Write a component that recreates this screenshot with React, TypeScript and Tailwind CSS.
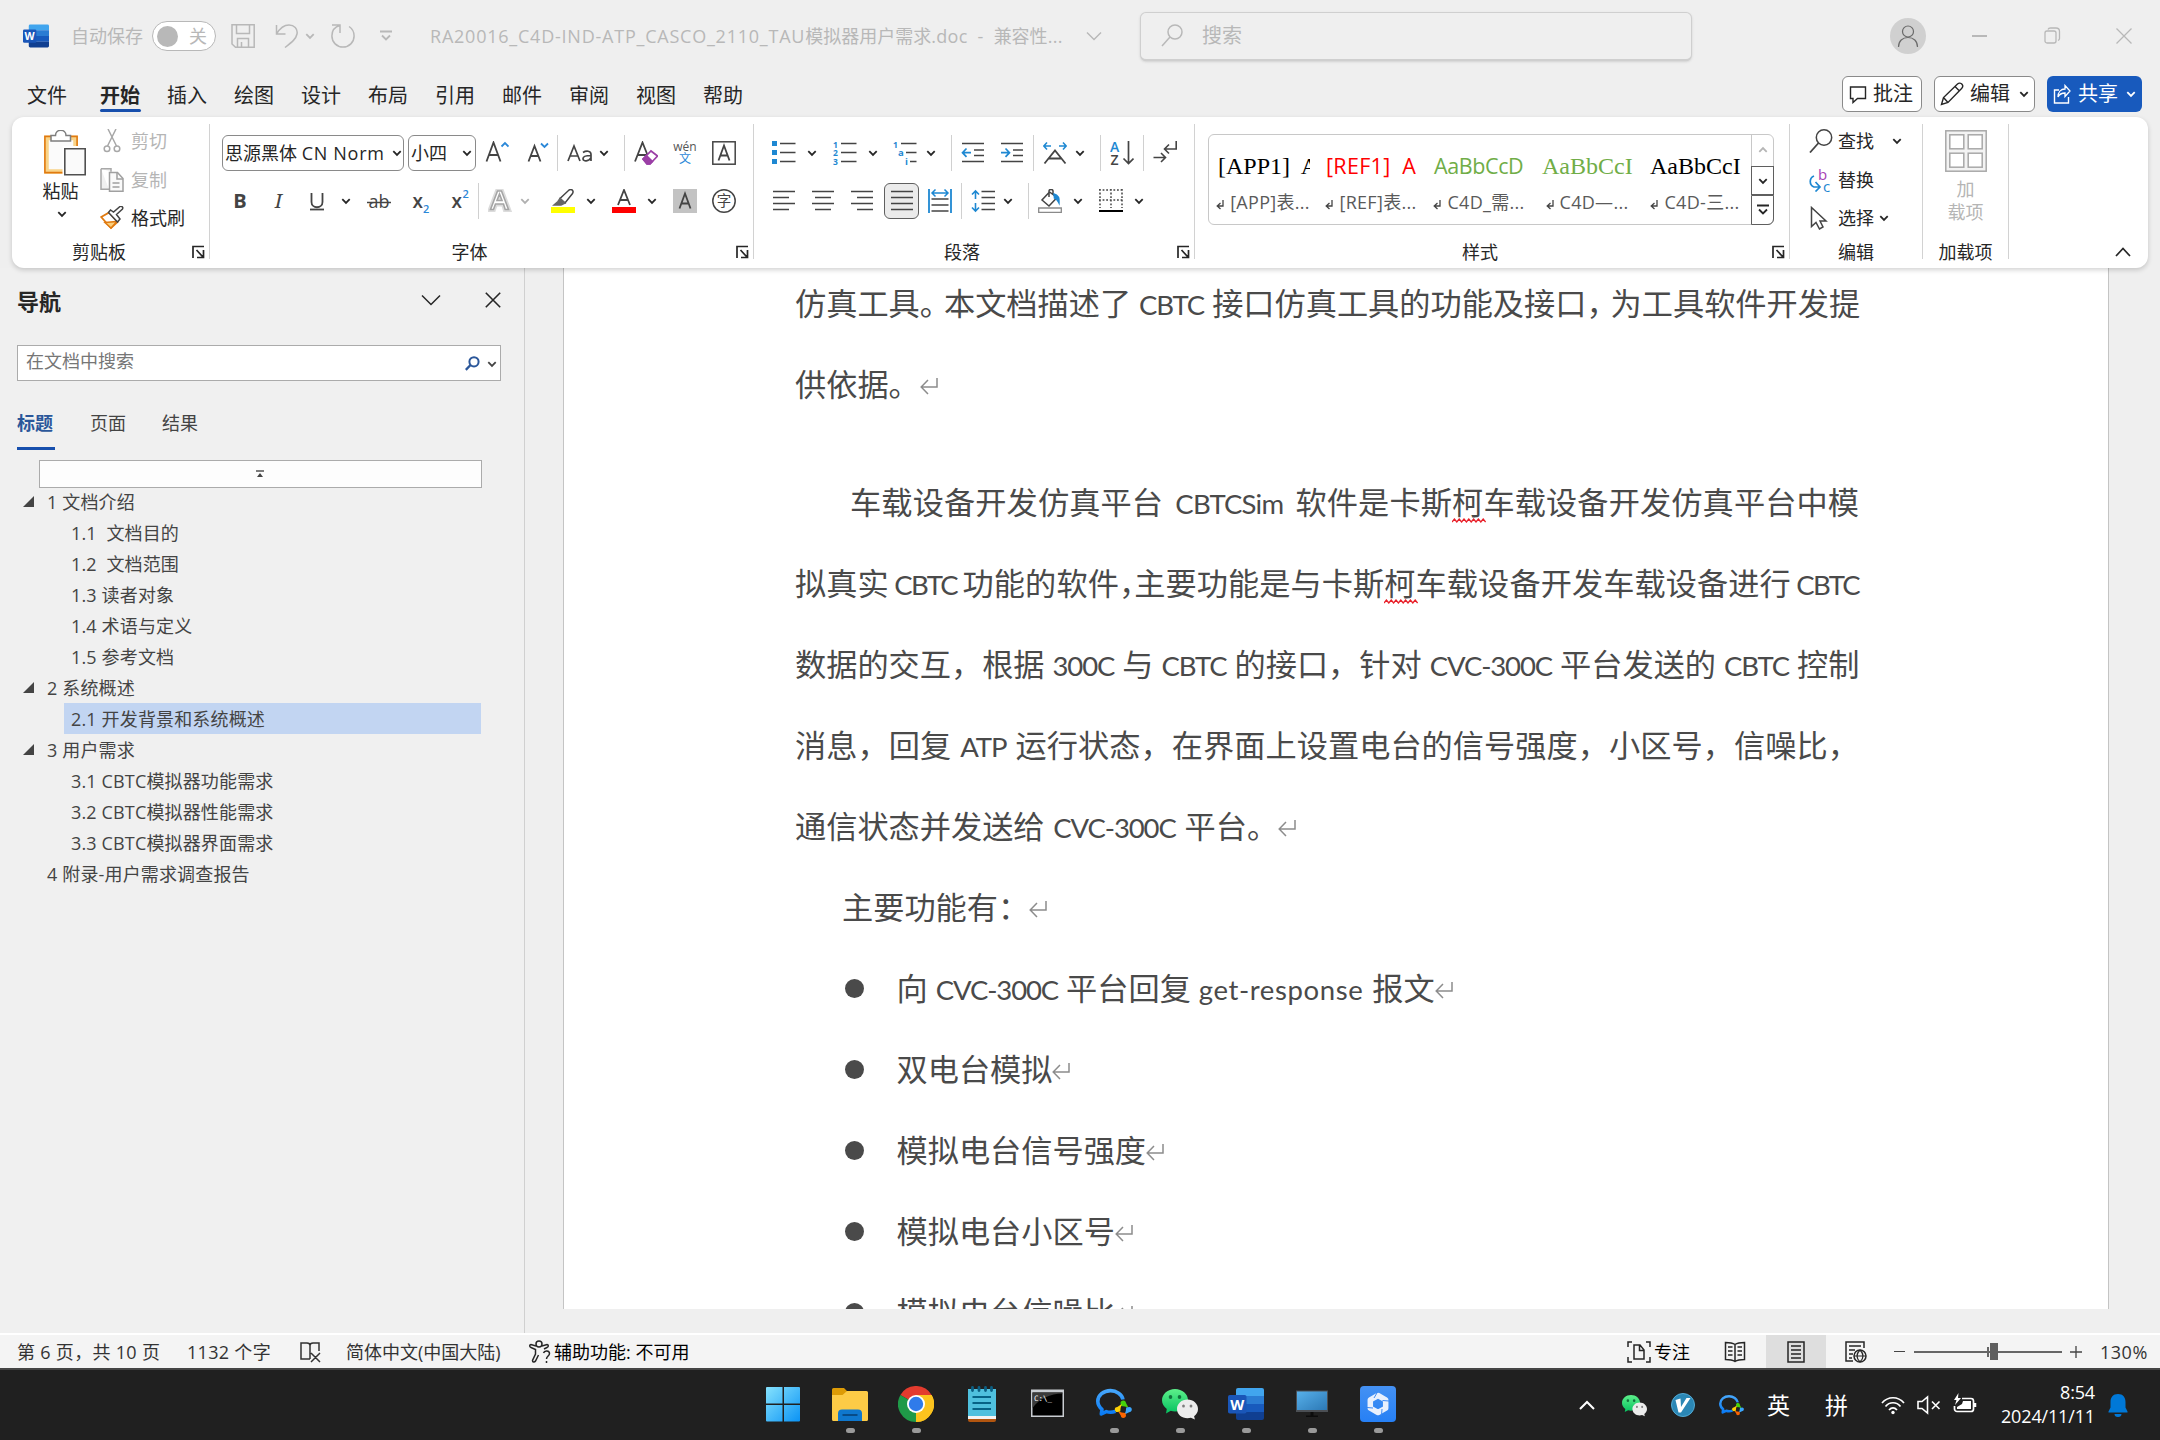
import type { ReactNode } from 'react';

const UI = "font-['Open_Sans','Noto_Sans_CJK_SC',sans-serif]";

function Svg({ w = 24, h = 24, className = '', children }: { w?: number; h?: number; className?: string; children: ReactNode }) {
  return (
    <svg width={w} height={h} viewBox={`0 0 ${w} ${h}`} fill="none" stroke="#444444" strokeWidth="1.5" className={`shrink-0 ${className}`}>
      {children}
    </svg>
  );
}

function Chev({ className = '', color = '#262626' }: { className?: string; color?: string }) {
  return (
    <Svg w={10} h={10} className={className}>
      <path d="M1.3 3.2 5 6.9 8.7 3.2" stroke={color} strokeWidth="1.8" />
    </Svg>
  );
}

function Sep({ className = '' }: { className?: string }) {
  return <div className={`h-9 w-px shrink-0 bg-[#d0d0d0] ${className}`} />;
}

/* ---------- shared app logos ---------- */

function WordLogo({ size, className = '' }: { size: number; className?: string }) {
  return (
    <svg width={size} height={size} viewBox="0 0 36 36" className={`shrink-0 ${className}`}>
      <path d="M10 2h24a2 2 0 0 1 2 2v6H8V4a2 2 0 0 1 2-2z" fill="#41a5ee" />
      <path d="M8 10h28v8H8z" fill="#2b7cd3" />
      <path d="M8 18h28v8H8z" fill="#185abd" />
      <path d="M8 26h28v6a2 2 0 0 1-2 2H10a2 2 0 0 1-2-2z" fill="#103f91" />
      <rect x="0" y="9" width="18.5" height="18.5" rx="1.8" fill="#1a56b8" />
      <text x="9.2" y="23.6" fontSize="14.5" fontWeight="700" textAnchor="middle" fill="#fff" fontFamily="Open Sans">W</text>
    </svg>
  );
}

function WeChat({ size, className = '' }: { size: number; className?: string }) {
  return (
    <svg width={size} height={size} viewBox="0 0 36 36" className={`shrink-0 ${className}`}>
      <defs>
        <linearGradient id="wc" x1="0" y1="0" x2="0" y2="1">
          <stop offset="0" stopColor="#5df08a" />
          <stop offset="1" stopColor="#05c160" />
        </linearGradient>
      </defs>
      <path d="M13 3C5.800 3 0 8 0 14.300c0 3.500 1.800 6.500 4.800 8.600L4 27.500l4.800-2.700c1.300.4 2.700.6 4.200.6 7.200 0 13-5 13-11.200S20.200 3 13 3z" fill="url(#wc)" />
      <ellipse cx="8.500" cy="11" rx="1.800" ry="2" fill="#11743e" />
      <ellipse cx="17.500" cy="11" rx="1.800" ry="2" fill="#11743e" />
      <path d="M25.500 13.500C19.700 13.500 15 17.700 15 23s4.700 9.300 10.500 9.300c1.200 0 2.300-.2 3.400-.5l4 1.700-.8-3.300c2.400-1.700 3.900-4.200 3.900-7.200 0-5.300-4.700-9.500-10.500-9.500z" fill="#ececec" />
      <ellipse cx="21.500" cy="20" rx="1.400" ry="1.600" fill="#7d7d7d" />
      <ellipse cx="29" cy="20" rx="1.400" ry="1.600" fill="#7d7d7d" />
    </svg>
  );
}

function WeCom({ size, className = '' }: { size: number; className?: string }) {
  return (
    <svg width={size} height={size} viewBox="0 0 36 36" className={`shrink-0 ${className}`}>
      <defs>
        <linearGradient id="wecom" x1="0" y1="0" x2="0" y2="1">
          <stop offset="0" stopColor="#45a6fb" />
          <stop offset="1" stopColor="#0a7bf5" />
        </linearGradient>
      </defs>
      <path d="M27 13.500C26 8.500 20.500 4.600 14.500 4.600 7.500 4.600 1.800 9.300 1.800 15.300c0 3.200 1.500 5.900 4.200 8L5.300 28l5-2.400c2.800.9 6 .9 9.200-.2" fill="none" stroke="url(#wecom)" strokeWidth="3.600" strokeLinejoin="round" />
      <g>
        <path d="M27.300 14.500c2 0 2.700 1.500 2.700 2.600l2.500 4.700-3.500-1.300-4-.5-.5-3c0-1.500 1.200-2.500 2.800-2.500z" fill="#45d30a" />
        <path d="M35.800 23.500c0 1.800-1.400 2.700-2.700 2.700L28.500 28.500l1.300-3.500.4-3.500 3.200-.5c1.500 0 2.400 1.200 2.400 2.500z" fill="#3ba6fc" />
        <path d="M27.300 32c-1.800 0-2.500-1.400-2.500-2.500L22 25.200l3.800 1.300 3.700.4.500 2.700c0 1.500-1.200 2.400-2.700 2.400z" fill="#fb6500" />
        <path d="M18.800 23.500c0-1.800 1.200-2.500 2.500-2.500l4.500-3-1.200 4-.3 3.600-3 .5c-1.500 0-2.500-1.200-2.500-2.600z" fill="#fdd005" />
      </g>
    </svg>
  );
}

/* ---------- title bar ---------- */

function TitleBar() {
  return (
    <div className="flex h-[72px] items-center text-lg leading-none text-[#b8b8b8]">
      <WordLogo size={26} className="ml-[23px]" />
      <span className="ml-[22px] w-[74px]">自动保存</span>
      <div className="ml-[7px] flex h-[30px] w-16 items-center rounded-full border-[1.5px] border-[#b8b8b8] bg-white pl-[4px]">
        <span className="size-[21px] rounded-full bg-[#b8b8b8]" />
        <span className="ml-[11px]">关</span>
      </div>
      <Svg className="ml-[15px]">
        <g stroke="#b8b8b8">
          <path d="M1 .8h22.200v22.400H4.500L1 20zM5.500 1v8.500h13V1M6.500 23v-8.500h11V23M10.500 18v5" />
        </g>
      </Svg>
      <Svg className="ml-5">
        <path d="M1.500 1v9h9M1.500 10C5 4 9 1 14 1c5 0 9 3.500 8 9-1 5-5 8-12 13.500" stroke="#b8b8b8" />
      </Svg>
      <Chev className="ml-[6px]" color="#b8b8b8" />
      <Svg className="ml-[16px]">
        <path d="M1 1h8v8M9 1.500C3 3 .9 7.500.9 12a11.100 11.100 0 0 0 22.200 0c0-4-2-7.500-5-9.500" stroke="#b8b8b8" />
      </Svg>
      <Svg w={12} h={12} className="ml-[25px]">
        <path d="M0 1.500h12M2 5.500l4 4 4-4" stroke="#b8b8b8" strokeWidth="1.800" />
      </Svg>
      <span className="ml-[38px] w-[634px] text-lg whitespace-pre">
        <span className="tracking-[0.770px]">RA20016_C4D-IND-ATP_CASCO_2110_TAU</span>模拟器用户需求<span className="tracking-[0.300px]">.doc  -  </span>兼容性<span className="tracking-[0.300px]">...</span>
      </span>
      <Svg w={16} h={10} className="ml-[22px]">
        <path d="M1 1.500l7 7 7-7" stroke="#b8b8b8" />
      </Svg>
      <div className="mt-px ml-[38px] flex h-[49px] w-[552px] items-center rounded-md border border-b-2 border-[#cfcfcf] bg-[#efefef] pl-5 text-xl shadow-sm">
        <Svg w={22}>
          <circle cx="14" cy="8" r="7" stroke="#b8b8b8" />
          <path d="M9 13L1 22" stroke="#b8b8b8" />
        </Svg>
        <span className="ml-[19px]">搜索</span>
      </div>
      <div className="ml-[198px] flex size-9 items-center justify-center rounded-full bg-[#d0d0d0]">
        <Svg w={22}>
          <circle cx="11" cy="7.500" r="5.500" stroke="#6a6a6a" strokeWidth="1.200" />
          <path d="M1.500 23c0-6 4-9.500 9.500-9.500s9.500 3.500 9.500 9.500" stroke="#6a6a6a" strokeWidth="1.200" />
        </Svg>
      </div>
      <div className="ml-[46px] h-[1.500px] w-[15px] bg-[#b8b8b8]" />
      <Svg w={18} h={18} className="ml-[57px]">
        <rect x="1" y="4" width="11" height="12" rx="2" stroke="#b8b8b8" strokeWidth="1.300" />
        <path d="M4 2.500C4.500 1 5 1 6.500 1H12c2 0 3.500 1 3.500 3.500v7c0 1-.5 1.500-1.500 2" stroke="#b8b8b8" strokeWidth="1.300" />
      </Svg>
      <Svg w={16} h={16} className="ml-[54px]">
        <path d="M.5.500l15 15M15.500.500l-15 15" stroke="#b8b8b8" strokeWidth="1.300" />
      </Svg>
    </div>
  );
}

const tabs = ['文件', '开始', '插入', '绘图', '设计', '布局', '引用', '邮件', '审阅', '视图', '帮助'];

function TabRow() {
  return (
    <div className="flex h-[45px] pl-[27px] text-xl leading-none text-[#262626]">
      {tabs.map((t, i) => (
        <div key={t} className={`relative pt-[14px] ${i === 0 ? 'w-[73px]' : 'w-[67px]'} ${i === 1 ? 'font-bold' : ''}`}>
          {t}
          {i === 1 && <span className="absolute top-[37px] left-0 h-[3px] w-[41px] rounded-full bg-[#174fad]" />}
        </div>
      ))}
      <div className="mt-1 ml-auto flex h-9 w-20 items-center rounded-md border border-[#8a8a8a] bg-white pl-[6px]">
        <Svg w={18} h={20}>
          <path d="M1.500 3h15v11.500H8.500L4 18.500v-4H1.500z" stroke="#262626" strokeWidth="1.400" />
        </Svg>
        <span className="ml-[6px]">批注</span>
      </div>
      <div className="mt-1 ml-3 flex h-9 w-[101px] items-center rounded-md border border-[#8a8a8a] bg-white pl-[5px]">
        <Svg>
          <path d="M1.500 22.500l2-7L17.500 2c1.500-1.300 3.500-1 4.500.2 1 1.200.8 3-.4 4.200L8 20.500zM15 4.500l4.500 4.500M3.500 15.500L8 20.500" stroke="#262626" strokeWidth="1.400" />
        </Svg>
        <span className="ml-[6px]">编辑</span>
        <Chev className="ml-[9px]" />
      </div>
      <div className="mt-1 mr-[18px] ml-3 flex h-9 w-[95px] items-center rounded-md bg-[#185abd] pl-[6px] text-white">
        <Svg w={18} h={20}>
          <path d="M6 6H1.500v13h14v-6" stroke="#fff" strokeWidth="1.400" />
          <path d="M5 13c0-5 3-8 7-8V1.500L17 7l-5 5.500V9C9 9 6.500 10 5 13z" stroke="#fff" strokeWidth="1.300" />
        </Svg>
        <span className="ml-[7px]">共享</span>
        <Chev className="ml-[8px]" color="#fff" />
      </div>
    </div>
  );
}

/* ---------- ribbon ---------- */

function Group({ className, label, launcher = true, children }: { className: string; label: string; launcher?: boolean; children: ReactNode }) {
  return (
    <div className={`flex h-[135px] shrink-0 flex-col border-r border-[#d2d2d2] ${className}`}>
      <div className="h-[121px]">{children}</div>
      <div className="flex h-[14px] items-center">
        <span className="flex-1 text-center text-lg leading-none text-[#262626]">{label}</span>
        {launcher && (
          <div className="w-[24px] pl-[7px]">
            <Svg w={13} h={14}>
              <path d="M1 13V1.500h11M4.500 5l6 6.500M11.500 5v7.500H5" stroke="#262626" strokeWidth="1.700" />
            </Svg>
          </div>
        )}
      </div>
    </div>
  );
}

function Clipboard() {
  return (
    <Group className="w-[198px] pl-px" label="剪贴板">
      <div className="flex">
        <div className="ml-[24px] flex w-[47px] flex-col items-center pt-[6px]">
          <Svg w={42} h={46} className="ml-[8px]">
            <path d="M2.500 8h29v33.500h-29z" fill="#fbfbfb" stroke="#f9d489" strokeWidth="4.500" />
            <path d="M.9 6.400h32.200V42.600H.9z" stroke="#e07a10" strokeWidth="1.600" />
            <path d="M7 11V5.500h4.500c0-7 10.500-7 10.500 0h4.500V11z" fill="#fff" stroke="#7e7e7e" strokeWidth="1.500" />
            <path d="M18.500 16h23.500v30h-23.500z" fill="#fff" stroke="none" />
            <path d="M20.800 18.800h20.400v26H20.800z" fill="#fafafa" stroke="#505050" strokeWidth="1.600" />
          </Svg>
          <span className="mt-[6px] text-lg leading-none text-[#262626]">粘贴</span>
          <Chev className="mt-[9px] ml-[3px]" />
        </div>
        <div className="ml-[16px] flex flex-col pt-[5px] text-lg leading-none text-[#b5b5b5]">
          <div className="flex h-6 items-center">
            <Svg>
              <g stroke="#a8a8a8">
                <path d="M8 0l8.500 17M16 0L7.500 17" />
                <circle cx="7" cy="19.800" r="2.800" />
                <circle cx="17" cy="19.800" r="2.800" />
              </g>
            </Svg>
            <span className="ml-[7px]">剪切</span>
          </div>
          <div className="mt-[15px] flex h-6 items-center">
            <Svg>
              <path d="M1 .8h10v3M9 21.200H1V.8" stroke="#a8a8a8" fill="#f1f1f1" />
              <path d="M9.500 4.500h8l5.500 6v12.700H9.500z" fill="#fafafa" stroke="#a0a0a0" />
              <path d="M17 4.500v6.500h6M12.500 15h7M12.500 19h7" stroke="#a0a0a0" />
            </Svg>
            <span className="ml-[7px]">复制</span>
          </div>
          <div className="mt-[14px] flex h-6 items-center text-[#262626]">
            <Svg>
              <path d="M1.200 11l8-4.500 8.300 9.500-6.500 6z" fill="#fff" stroke="#e07a10" strokeWidth="1.800" />
              <path d="M5 16.500l12-1-6 6.500z" fill="#fbd07d" stroke="#e07a10" />
              <path d="M8.500 6.500l9 9.500 2.500-3-3.500-4.500 6-5.500c1-2-.7-3-2.500-2.500l-6.500 5.500L10.500 4z" fill="#fff" stroke="#444" />
            </Svg>
            <span className="ml-[7px]">格式刷</span>
          </div>
        </div>
      </div>
    </Group>
  );
}

function GText({ children, ...p }: { children: ReactNode; [k: string]: unknown }) {
  return (
    <text stroke="none" fill="#444444" fontFamily="Open Sans, Noto Sans CJK SC" {...p}>
      {children}
    </text>
  );
}

function FontGroup() {
  return (
    <Group className="w-[544px]" label="字体">
      <div className="flex items-center pt-[11px] pl-3 text-lg leading-none text-[#262626]">
        <div className="flex h-9 w-[182px] shrink-0 items-center rounded-md border border-[#8a8a8a] pl-[2px]">
          <span className="w-[164px] whitespace-nowrap">
            思源黑体 <span className="tracking-[0.700px]">CN Norm</span>
          </span>
          <Chev className="ml-[3px]" />
        </div>
        <div className="ml-1 flex h-9 w-[68px] shrink-0 items-center rounded-md border border-[#8a8a8a] pl-[2px]">
          小四
          <Chev className="ml-[15px]" />
        </div>
        <Svg className="ml-[9px]">
          <path d="M1.500 20.500L8.500 1.500l7 19M4 14h9" strokeWidth="1.800" />
          <path d="M16.500 5.500L20 2l3.500 3.500" stroke="#2b88d8" strokeWidth="1.800" />
        </Svg>
        <Svg className="ml-4">
          <path d="M3.500 20.500L9.500 5l6 15.500M6 15h7" strokeWidth="1.800" />
          <path d="M16 2.500L19.500 6 23 2.500" stroke="#2b88d8" strokeWidth="1.800" />
        </Svg>
        <Sep className="ml-2" />
        <Svg w={26} className="ml-[9px]">
          <path d="M1 20L7 5l6 15M3.200 15h7.600" strokeWidth="1.700" />
          <path d="M16 11.500c3-2 8-2 8 2V20M24 14.500c-4 0-8 .5-8 3.200 0 3 6 3 8-1" strokeWidth="1.700" />
        </Svg>
        <Chev className="ml-[6px]" />
        <Sep className="ml-[15px]" />
        <Svg className="ml-[9px]">
          <path d="M1 20.500L8.500 1.500l6 15M4 14h9" strokeWidth="1.800" />
          <path d="M9 18l8-8 6.500 5-7.500 8h-3z" fill="#fff" stroke="#9b3fa6" strokeWidth="1.700" />
          <path d="M9 18l3.500-3.500 6 6L16 23h-3z" fill="#9b3fa6" stroke="#9b3fa6" />
        </Svg>
        <Svg className="ml-[15px]">
          <GText x="12" y="9.500" fontSize="12" textAnchor="middle" fill="#555">wén</GText>
          <GText x="12" y="22" fontSize="12" textAnchor="middle" fill="#2b88d8">文</GText>
        </Svg>
        <Svg className="ml-[15px]">
          <rect x=".8" y=".8" width="22.400" height="22.400" />
          <path d="M6.500 19.500L12 4.500l5.500 15M8.500 14.500h7" strokeWidth="1.800" />
        </Svg>
      </div>
      <div className="mt-3 flex h-9 items-center pl-[18px]">
        <Svg><GText x="12" y="18.500" fontSize="20" fontWeight="700" textAnchor="middle">B</GText></Svg>
        <Svg className="ml-[14px]"><GText x="12.500" y="18.500" fontSize="20" fontStyle="italic" textAnchor="middle" fontFamily="Noto Serif, Liberation Serif">I</GText></Svg>
        <Svg className="ml-[15px]">
          <path d="M6.500 4v9c0 7 11 7 11 0V4" strokeWidth="1.800" />
          <path d="M5 20.500h14" strokeWidth="1.800" />
        </Svg>
        <Chev className="ml-3" />
        <Svg className="ml-4">
          <GText x="12" y="18.500" fontSize="18" textAnchor="middle">ab</GText>
          <path d="M0 13.500h24" />
        </Svg>
        <Svg className="ml-[18px]">
          <GText x="3.500" y="18.500" fontSize="19" fontWeight="600">x</GText>
          <GText x="14" y="23.500" fontSize="11" fill="#2b88d8" fontWeight="600">2</GText>
        </Svg>
        <Svg className="ml-[15px]">
          <GText x="3.500" y="18.500" fontSize="19" fontWeight="600">x</GText>
          <GText x="14.500" y="8.500" fontSize="11" fill="#2b88d8" fontWeight="600">2</GText>
        </Svg>
        <Sep className="ml-[6px]" />
        <Svg className="ml-[9px]">
          <path d="M2.500 20.500L9.500 2h4l7 18.500h-3.300L15.500 15h-8l-2 5.500zM9 11.500h5L11.500 5z" fill="#fff" stroke="#dcdcdc" strokeWidth="5" />
          <path d="M2.500 20.500L9.500 2h4l7 18.500h-3.300L15.500 15h-8l-2 5.500zM9 11.500h5L11.500 5z" fill="#fff" stroke="#a5a5a5" strokeWidth="1.600" />
        </Svg>
        <Chev className="ml-2" color="#b0b0b0" />
        <Svg className="ml-[21px]">
          <path d="M0 18h24v6H0z" fill="#ffff00" stroke="none" />
          <path d="M9 9.500L18 1c3-1.500 5 1 3.500 3.500L14 14z" />
          <path d="M9 9.500L14 14l-4 2H3l4-3.500z" fill="#666" stroke="#666" />
        </Svg>
        <Chev className="ml-[11px]" />
        <Svg className="ml-4">
          <path d="M0 18h24v6H0z" fill="#ff0000" stroke="none" />
          <path d="M6 16L12 1l6 15M8 11h8" strokeWidth="1.800" />
        </Svg>
        <Chev className="ml-[11px]" />
        <Svg className="ml-4">
          <path d="M0 0h24v24H0z" fill="#c3c3c3" stroke="none" />
          <path d="M6.500 19.500L12 4.500l5.500 15M8.500 14.500h7" strokeWidth="1.800" />
        </Svg>
        <Svg className="ml-[15px]">
          <circle cx="12" cy="12" r="11.200" />
          <GText x="12" y="17.200" fontSize="14.500" textAnchor="middle">字</GText>
        </Svg>
      </div>
    </Group>
  );
}

const B = '#1e88d2';

function ParagraphGroup() {
  return (
    <Group className="w-[441px]" label="段落">
      <div className="mt-[11px] flex h-9 items-center pl-[18px]">
        <Svg>
          <path d="M8 2.500h15.500M8 11.500h15.500M8 20.500h15.500" strokeWidth="1.700" />
          <path d="M0 0h5v5H0zM0 9h5v5H0zM0 18h5v5H0z" fill={B} stroke="none" />
        </Svg>
        <Chev className="ml-[11px]" />
        <Svg className="ml-4">
          <path d="M8 2.500h15.500M8 11.500h15.500M8 20.500h15.500" strokeWidth="1.700" />
          <GText x="0" y="6.500" fontSize="8.500" fontWeight="700" fill={B}>1</GText>
          <GText x="0" y="15" fontSize="8.500" fontWeight="700" fill={B}>2</GText>
          <GText x="0" y="23.800" fontSize="8.500" fontWeight="700" fill={B}>3</GText>
        </Svg>
        <Chev className="ml-[11px]" />
        <Svg className="ml-[15px]">
          <path d="M8 2.500h15.500M13 11.500h10.500M17 20.500h6.500" strokeWidth="1.700" />
          <GText x="0" y="6.500" fontSize="8.500" fontWeight="700" fill={B}>1</GText>
          <GText x="5" y="15" fontSize="9.500" fontWeight="700" fill={B}>a</GText>
          <GText x="12" y="23.800" fontSize="9.500" fontWeight="700" fill={B}>i</GText>
        </Svg>
        <Chev className="ml-[9px]" />
        <Sep className="ml-[15px]" />
        <Svg className="ml-[9px]">
          <path d="M1 2.500h22M13 9h10M13 14.500h10M1 20.500h22" strokeWidth="1.700" />
          <path d="M1.500 11.700H10M5.500 7.500L1.500 11.700l4 4.200" stroke={B} strokeWidth="1.700" />
        </Svg>
        <Svg className="ml-[15px]">
          <path d="M1 2.500h22M13 9h10M13 14.500h10M1 20.500h22" strokeWidth="1.700" />
          <path d="M1 11.700h8.500M5.500 7.500l4 4.200-4 4.200" stroke={B} strokeWidth="1.700" />
        </Svg>
        <Sep className="ml-[9px]" />
        <Svg className="ml-[9px]">
          <path d="M1.500 22.500L12 9.500l10.500 13M6 17.500h12" strokeWidth="1.800" />
          <path d="M1 5h7M4 1.500L.8 5 4 8.500M23 5h-7M20 1.500L23.200 5 20 8.500" stroke={B} strokeWidth="1.600" />
        </Svg>
        <Chev className="ml-2" />
        <Sep className="ml-[15px]" />
        <Svg className="ml-[9px]">
          <GText x="0" y="10.500" fontSize="14" fontWeight="600" fill={B}>A</GText>
          <GText x=".5" y="23.500" fontSize="14" fontWeight="600">Z</GText>
          <path d="M18.500 0v22.500M13.500 17.500l5 5 5-5" strokeWidth="1.700" />
        </Svg>
        <Sep className="ml-[9px]" />
        <Svg className="ml-[9px]">
          <path d="M23.200 0v8H12M16 3.500L11.500 8l4.500 4.500M.5 16.500h12M8 12l4.500 4.500L8 21" strokeWidth="1.600" />
        </Svg>
      </div>
      <div className="mt-3 flex h-9 items-center pl-[18px]">
        <Svg><path d="M1 2.500h22M1 8.500h16M1 14.500h22M1 20.500h16" strokeWidth="1.700" /></Svg>
        <Svg className="ml-[15px]"><path d="M1 2.500h22M4 8.500h16M1 14.500h22M4 20.500h16" strokeWidth="1.700" /></Svg>
        <Svg className="ml-[15px]"><path d="M1 2.500h22M7 8.500h16M1 14.500h22M7 20.500h16" strokeWidth="1.700" /></Svg>
        <div className="ml-[10px] flex h-9 w-[35px] items-center justify-center rounded-md border border-[#5f5f5f] bg-[#ebebeb]">
          <Svg><path d="M1 2.500h22M1 8.500h22M1 14.500h22M1 20.500h22" strokeWidth="1.700" /></Svg>
        </div>
        <Svg className="ml-[9px]">
          <path d="M1 0v24M23 0v24" stroke={B} strokeWidth="1.800" />
          <path d="M4 4h16M7.500.5L4 4l3.500 3.500M16.500.5L20 4l-3.500 3.500" stroke={B} strokeWidth="1.500" />
          <path d="M3.500 10h17M3.500 16h17M3.500 22h17" strokeWidth="1.700" />
        </Svg>
        <Sep className="ml-[9px]" />
        <Svg className="ml-[9px]">
          <path d="M10.500 2.500H24M10.500 8.500H24M10.500 14.500H24M10.500 20.500H24" strokeWidth="1.700" />
          <path d="M4.500 2v8M4.500 14v8M1 5.500L4.500 2 8 5.500M1 18.500L4.500 22 8 18.500" stroke={B} strokeWidth="1.600" />
        </Svg>
        <Chev className="ml-2" />
        <Sep className="ml-[15px]" />
        <Svg className="ml-[9px]">
          <path d="M.7 19h22.600v4.300H.7z" stroke="#8a8a8a" strokeWidth="1.300" />
          <path d="M11.500 3L4 11l7 6 8-8.500zM11 8V2c0-2 4-2 4 0v4" />
          <path d="M16 5c4 1 5.500 4 5 9-1.500-3-2-4.500-4.500-5z" fill={B} stroke={B} />
        </Svg>
        <Chev className="ml-[11px]" />
        <Svg className="ml-4">
          <path d="M1 0v19M12 0v19M23 0v19M0 1h24M0 11h24" strokeWidth="1.500" strokeDasharray="1.800 1.800" />
          <path d="M0 22h24" stroke="#000" strokeWidth="2" />
        </Svg>
        <Chev className="ml-[11px]" />
      </div>
    </Group>
  );
}

const styleCells = [
  { text: '[APP1]  A', cls: "font-['Liberation_Serif'] text-2xl text-black pl-[9px]", label: '[APP]表...' },
  { text: '[REF1]  A', cls: "font-['Open_Sans'] text-[21.500px] tracking-[0.300px] text-[#ff0000] pl-[9px]", label: '[REF]表...' },
  { text: 'AaBbCcD', cls: "font-['Open_Sans'] text-[21.500px] tracking-[-0.400px] text-[#70ad47] pl-[9px]", label: 'C4D_需...' },
  { text: 'AaBbCcI', cls: "font-['Liberation_Serif'] text-2xl text-[#70ad47] pl-[9px]", label: 'C4D—...' },
  { text: 'AaBbCcI', cls: "font-['Liberation_Serif'] text-2xl text-black pl-[9px]", label: 'C4D-三...' },
];

function StylesGroup() {
  return (
    <Group className="w-[595px]" label="样式">
      <div className="mt-[10px] ml-[13px] flex h-[91px] w-[566px] rounded-md border border-[#c8c8c8]">
        {styleCells.map((c, i) => (
          <div key={i} className="flex w-[108px] shrink-0 flex-col overflow-hidden pt-[18px]">
            <div className={`h-[26px] w-[101px] overflow-hidden leading-[26px] whitespace-pre ${c.cls}`}>{c.text}</div>
            <div className="mt-[11px] flex items-center justify-center text-lg leading-6 tracking-[0.300px] whitespace-nowrap text-[#5a5a5a]">
              <Svg w={8} h={10} className="mt-[6px] mr-[6px]">
                <path d="M7 0v6H2M4.500 3L1.200 6l3.300 3" strokeWidth="1.300" />
              </Svg>
              {c.label}
            </div>
          </div>
        ))}
        <div className="-my-px -mr-px ml-[2px] flex w-[23px] flex-col">
          <div className="flex h-8 items-center justify-center rounded-tr-md border-l border-[#c8c8c8]">
            <Chev className="rotate-180" color="#b5b5b5" />
          </div>
          <div className="flex h-[29px] items-center justify-center border border-[#5f5f5f]"><Chev /></div>
          <div className="flex h-[30px] items-center justify-center rounded-br-md border border-[#5f5f5f]">
            <Svg w={12} h={12}><path d="M0 1.500h12M2 5.500l4 4 4-4" stroke="#262626" strokeWidth="1.800" /></Svg>
          </div>
        </div>
      </div>
    </Group>
  );
}

function Ribbon() {
  return (
    <div className="relative z-10 mx-3 flex h-[151px] rounded-xl bg-white pt-[7px] shadow-[0_2px_5px_rgba(0,0,0,0.18)]">
      <Clipboard />
      <FontGroup />
      <ParagraphGroup />
      <StylesGroup />
      <Group className="w-[133px]" label="编辑" launcher={false}>
        <div className="flex flex-col pt-[5px] pl-[19px] text-lg leading-none text-[#262626]">
          <div className="flex h-6 items-center">
            <Svg><circle cx="15" cy="8.500" r="7.700" /><path d="M9.500 14L1 23.500" strokeWidth="1.800" /></Svg>
            <span className="ml-[5px]">查找</span>
            <Chev className="ml-[18px]" />
          </div>
          <div className="mt-[15px] flex h-6 items-center">
            <Svg>
              <GText x="9" y="11.500" fontSize="15" fill="#a83fb5">b</GText>
              <GText x="14" y="23.500" fontSize="15" fill={B}>c</GText>
              <path d="M5 8C0 10 0 17 5 19h5M6.500 14l4.500 5-4.500 4.500" stroke={B} strokeWidth="1.700" />
            </Svg>
            <span className="ml-[5px]">替换</span>
          </div>
          <div className="mt-[14px] flex h-6 items-center">
            <Svg><path d="M2.500 1.500v19l4.500-4 3.500 6.500 3.500-2-3-6h6z" /></Svg>
            <span className="ml-[5px]">选择</span>
            <Chev className="ml-[5px]" />
          </div>
        </div>
      </Group>
      <Group className="w-[86px]" label="加载项" launcher={false}>
        <div className="flex flex-col items-center pt-[6px] text-lg leading-none text-[#b5b5b5]">
          <Svg w={42} h={42}>
            <g stroke="#a8a8a8">
              <rect x=".8" y=".8" width="40.400" height="40.400" fill="#f3f3f3" />
              <rect x="4.800" y="4.800" width="14" height="14" fill="#fff" />
              <rect x="23.200" y="4.800" width="14" height="14" fill="#fff" />
              <rect x="4.800" y="23.200" width="14" height="14" fill="#fff" />
              <rect x="23.200" y="23.200" width="14" height="14" fill="#fff" />
            </g>
          </Svg>
          <span className="mt-2">加</span>
          <span className="mt-[5px]">载项</span>
        </div>
      </Group>
      <Svg w={16} h={10} className="mt-[123px] ml-[106px]">
        <path d="M1 9l7-7.500L15 9" stroke="#262626" strokeWidth="1.700" />
      </Svg>
    </div>
  );
}

/* ---------- navigation pane ---------- */

const outline: { level: 1 | 2; text: string; open?: boolean; active?: boolean }[] = [
  { level: 1, text: '1 文档介绍', open: true },
  { level: 2, text: '1.1  文档目的' },
  { level: 2, text: '1.2  文档范围' },
  { level: 2, text: '1.3 读者对象' },
  { level: 2, text: '1.4 术语与定义' },
  { level: 2, text: '1.5 参考文档' },
  { level: 1, text: '2 系统概述', open: true },
  { level: 2, text: '2.1 开发背景和系统概述', active: true },
  { level: 1, text: '3 用户需求', open: true },
  { level: 2, text: '3.1 CBTC模拟器功能需求' },
  { level: 2, text: '3.2 CBTC模拟器性能需求' },
  { level: 2, text: '3.3 CBTC模拟器界面需求' },
  { level: 1, text: '4 附录-用户需求调查报告' },
];

function NavPane() {
  return (
    <aside className="h-[1065px] w-[525px] shrink-0 border-r border-[#d0d0d0] bg-[#f0f0f0] pl-[17px] text-lg leading-none text-[#444444]">
      <div className="mt-[19px] flex h-[26px] items-center text-[22px] font-bold text-[#262626]">
        <span className="w-[404px] pt-[2px]">导航</span>
        <Svg w={20} h={12}><path d="M1 1.500l9 9 9-9" stroke="#262626" /></Svg>
        <Svg w={16} h={16} className="ml-11"><path d="M.8.8l14.400 14.400M15.200.8L.8 15.200" stroke="#262626" strokeWidth="1.600" /></Svg>
      </div>
      <div className="mt-8 flex h-9 w-[484px] items-center border border-[#ababab] bg-white pl-2 text-[#767676]">
        <span className="w-[439px] pb-[4px]">在文档中搜索</span>
        <Svg w={15} h={15}>
          <circle cx="9" cy="5.800" r="4.600" stroke="#2b579a" strokeWidth="2" />
          <path d="M5.500 9L.8 13.800" stroke="#2b579a" strokeWidth="2.400" />
        </Svg>
        <Chev className="mt-[2px] ml-[7px]" color="#444" />
      </div>
      <div className="mt-[33px] flex h-[36px]">
        <span className="mr-[35px] h-[36px] w-[38px] border-b-[3px] border-[#174fad] font-bold text-[#2b579a]">标题</span>
        <span className="mr-9 w-9">页面</span>
        <span>结果</span>
      </div>
      <div className="mt-[10px] ml-[22px] flex h-[28px] w-[443px] items-center justify-center border border-[#ababab] bg-[#fdfdfd]">
        <Svg w={8} h={8} className="-ml-[2px]"><path d="M0 1h8" strokeWidth="1.400" /><path d="M1 7l3-4 3 4z" fill="#444" stroke="none" /></Svg>
      </div>
      <div className="-mt-[2px]">
        {outline.map((o) => (
          <div key={o.text} className="flex h-[31px] items-center tracking-[0.150px] whitespace-pre">
            {o.level === 1 ? (
              <>
                <div className="w-[30px] pl-[6px]">
                  {o.open && <Svg w={11} h={11}><path d="M11 0v11H0z" fill="#444" stroke="none" /></Svg>}
                </div>
                <span>{o.text}</span>
              </>
            ) : (
              <div className={`ml-[47px] flex h-[31px] w-[417px] items-center pl-[7px] ${o.active ? 'bg-[#c2d5f2]' : ''}`}>{o.text}</div>
            )}
          </div>
        ))}
      </div>
    </aside>
  );
}

/* ---------- document ---------- */

function L({ className = 'tracking-[-1.100px]', children }: { className?: string; children: ReactNode }) {
  return <span className={`text-[27.500px] leading-none ${className}`}>{children}</span>;
}

function Ret({ className = '' }: { className?: string }) {
  return (
    <svg width="18" height="18" viewBox="0 0 18 18" fill="none" stroke="#8c8c8c" strokeWidth="1.500" className={`inline-block align-baseline ${className}`}>
      <path d="M17 0v9H1.500M8 2L1.200 9 8 16" />
    </svg>
  );
}

function Squiggle({ children }: { children: ReactNode }) {
  return (
    <span className="relative inline-block h-[81px] align-top">
      {children}
      <svg width="34" height="5" viewBox="0 0 34 5" fill="none" stroke="#e8202a" strokeWidth="1.300" className="absolute top-[56px] left-0">
        <path d="M0 4l2.400-3 2.400 3 2.400-3 2.400 3 2.400-3 2.400 3 2.400-3 2.400 3 2.400-3 2.400 3 2.400-3 2.400 3 2.400-3 2.400 3" />
      </svg>
    </span>
  );
}

const P = ({ children }: { children: ReactNode }) => <span className="mr-[-7px]">{children}</span>;

function Line({ className = '', children }: { className?: string; children: ReactNode }) {
  return <div className={`h-[81px] ${className}`}>{children}</div>;
}

const bullets: ReactNode[] = [
  <>向 <L>CVC-300C</L> 平台回复 <L className="mr-[1px] tracking-[0.600px]">get-response</L> 报文</>,
  '双电台模拟',
  '模拟电台信号强度',
  '模拟电台小区号',
  '模拟电台信噪比',
];

function Doc() {
  return (
    <div className="ml-[38px] h-[1041px] w-[1546px] overflow-hidden border-x border-[#c4c4c4] bg-white pl-[231px] font-['Lato','Noto_Sans_CJK_SC',sans-serif] text-[31.200px] leading-[81px] whitespace-nowrap text-[#4a4a4a]">
      <div className="w-[1064px]">
        <Line className="-mt-[5px] [text-align-last:justify]">仿真工具<P>。</P>本文档描述了 <L>CBTC</L> 接口仿真工具的功能及接口<P>，</P>为工具软件开发提</Line>
        <Line>供依据。<Ret /></Line>
        <Line className="mt-[37px] pl-[55px] [text-align-last:justify] [word-spacing:-2px]">车载设备开发仿真平台&nbsp; <L className="tracking-[-0.800px]">CBTCSim</L>&nbsp; 软件是卡斯<Squiggle>柯</Squiggle>车载设备开发仿真平台中模</Line>
        <Line className="[text-align-last:justify] [word-spacing:-2.500px]">拟真实 <L className="tracking-[-1.700px]">CBTC</L> 功能的软件<span className="mr-[-16px]">，</span>主要功能是与卡斯<Squiggle>柯</Squiggle>车载设备开发车载设备进行 <L className="tracking-[-1.700px]">CBTC</L></Line>
        <Line className="[text-align-last:justify]">数据的交互，根据 <L>300C</L> 与 <L>CBTC</L> 的接口，针对 <L>CVC-300C</L> 平台发送的 <L>CBTC</L> 控制</Line>
        <Line className="[text-align-last:justify] [word-spacing:1px]">消息，回复 <L>ATP</L> 运行状态，在界面上设置电台的信号强度，小区号，信噪比，</Line>
        <Line className="[word-spacing:0.800px]">通信状态并发送给 <L>CVC-300C</L> 平台。<Ret /></Line>
        <Line className="pl-[47px]">主要功能有：<Ret /></Line>
        {bullets.map((b, i) => (
          <div key={i} className="flex h-[81px] items-center pl-[50px]">
            <span className="mr-[32.500px] size-[19px] rounded-full bg-[#4a4a4a]" />
            <span className="h-[81px]">{b}<Ret /></span>
          </div>
        ))}
      </div>
    </div>
  );
}

/* ---------- status bar ---------- */

function StatusBar() {
  return (
    <div className="flex h-[35px] items-center border-t-2 border-white bg-[#f4f4f4] pl-[17px] text-lg leading-none whitespace-nowrap text-[#333333]">
      <span className="w-[170px] tracking-[0.300px]">第 6 页，共 10 页</span>
      <span className="w-[112px] tracking-[0.300px]">1132 个字</span>
      <Svg w={22} h={22}>
        <path d="M11 18H2V2h6c2 0 3 1 3 2.500C11 3 12 2 14 2h6v8M11 4.500V18M12 12l9 9M21 12l-9 9" stroke="#333" />
      </Svg>
      <span className="ml-[25px] w-[182px]">简体中文(中国大陆)</span>
      <Svg w={24} h={24}>
        <g stroke="#262626">
          <circle cx="11" cy="4" r="3" />
          <path d="M8 6L3 4.500C1 5 1.500 7 3 7.500l4.500 2V14l-3 6.500c0 2 2 2 3 .5l3-6M14 6l5-1.500c2 .5 1.500 2.500 0 3l-3 1.500M15.500 13c1-3 6-2.500 6 .5 0 2.500-3 2.500-3 5.500M18.500 21v2" />
        </g>
      </Svg>
      <span className="ml-[2px] text-black">辅助功能: 不可用</span>
      <Svg w={24} h={22} className="ml-auto">
        <path d="M1 6V1h4M19 1h4v5M1 16v5h4M19 21h4v-5M7 4h6l4 5v9H7zM12.500 4v5.500H17" stroke="#262626" />
      </Svg>
      <span className="ml-[3px] text-black">专注</span>
      <Svg w={22} h={22} className="ml-[34px]">
        <path d="M11 3.500C8 1.500 5 1.500 1.500 1.500v17c3.500 0 6.500 0 9.500 2 3-2 6-2 9.500-2v-17c-3.500 0-6.500 0-9.500 2zm0 0v17M4 6h4.500M4 10h4.500M4 14h4.500M13.500 6H18M13.500 10H18M13.500 14H18" stroke="#262626" />
      </Svg>
      <div className="ml-[20px] flex h-[33px] w-[60px] items-center justify-center bg-[#dedede]">
        <Svg w={18} h={22}><path d="M1 1h16v20H1zM4 5h10M4 9h10M4 13h10M4 17h10" stroke="#262626" /></Svg>
      </div>
      <Svg w={22} h={22} className="ml-[19px]">
        <path d="M8 20H1V1h18v6M4 5h12M4 9h6M4 13h4M4 17h3" stroke="#262626" />
        <circle cx="15" cy="15" r="6" stroke="#262626" />
        <path d="M9 15h12M15 9c-4 4-4 8 0 12M15 9c4 4 4 8 0 12" stroke="#262626" strokeWidth="1.200" />
      </Svg>
      <div className="ml-[27px] h-[1.500px] w-[11px] bg-[#444]" />
      <div className="relative ml-[9px] h-[2px] w-[148px] bg-[#666]">
        <span className="absolute -top-[4px] left-[73px] h-[10px] w-[2px] bg-[#666]" />
        <span className="absolute -top-[8px] left-[76px] h-[17px] w-[8px] bg-[#5f5f5f]" />
      </div>
      <Svg w={12} h={12} className="ml-[8px]"><path d="M0 6h12M6 0v12" stroke="#444" strokeWidth="1.300" /></Svg>
      <span className="mr-[12px] ml-[18px] w-[48px] tracking-[0.500px]">130%</span>
    </div>
  );
}

/* ---------- taskbar ---------- */

function App36({ running = true, children }: { running?: boolean; children: ReactNode }) {
  return (
    <div className="flex h-[70px] w-[66px] flex-col items-center pt-[16px]">
      {children}
      {running && <span className="mt-[6px] h-[5px] w-[9px] rounded-full bg-[#9a9a9a]" />}
    </div>
  );
}

const I36 = ({ children }: { children: ReactNode }) => (
  <svg width="36" height="36" viewBox="0 0 36 36" className="shrink-0">{children}</svg>
);

function Taskbar() {
  return (
    <div className="flex h-[72px] border-t-2 border-[#454545] bg-[#202020] text-white">
      <div className="flex pl-[750px]">
        <App36 running={false}>
          <I36>
            <defs>
              <linearGradient id="win" x1="0" y1="0" x2="1" y2="1">
                <stop offset="0" stopColor="#86e2fd" />
                <stop offset="1" stopColor="#0a93f5" />
              </linearGradient>
            </defs>
            <path d="M2 1h15.500v16.500H1V2a1 1 0 0 1 1-1zM19 1h15a1 1 0 0 1 1 1v15.500H19zM1 19h16.500v16.500H2a1 1 0 0 1-1-1zM19 19h16v15.500a1 1 0 0 1-1 1H19z" fill="url(#win)" />
          </I36>
        </App36>
        <div className="w-px" />
        <App36>
          <I36>
            <path d="M0 3.500A1.500 1.500 0 0 1 1.500 2H12l3 3v5H0z" fill="#dd9b06" />
            <path d="M0 9h10.500l4.500-4h19.500A1.500 1.500 0 0 1 36 6.500v27a1.500 1.500 0 0 1-1.500 1.500h-33A1.500 1.500 0 0 1 0 33.500z" fill="#fdcb46" />
            <path d="M6 35V27.500A4 4 0 0 1 10 23.500h16a4 4 0 0 1 4 4V35z" fill="#0f77cd" />
            <path d="M10.500 29h15" stroke="#084b87" strokeWidth="2" />
          </I36>
        </App36>
        <App36>
          <I36>
            <path d="M18 18L2.400 9A18 18 0 0 1 33.600 9z" fill="#e33b2e" />
            <path d="M18 18L33.600 9A18 18 0 0 1 18 36l-2-6z" fill="#fcc31e" />
            <path d="M18 18l0 18A18 18 0 0 1 2.400 9z" fill="#1f9a48" />
            <path d="M18 9h15.600A18 18 0 0 1 18 36l8-13z" fill="#fcc31e" />
            <circle cx="18" cy="18" r="9" fill="#fff" />
            <circle cx="18" cy="18" r="7.200" fill="#2f7bea" />
          </I36>
        </App36>
        <App36 running={false}>
          <I36>
            <path d="M4 31h28v3a2 2 0 0 1-2 2H6a2 2 0 0 1-2-2z" fill="#b2550f" />
            <path d="M4 28h28v5H4z" fill="#f3f3f3" />
            <path d="M4 3h28v27H4z" fill="#4fc0de" />
            <path d="M8.500 1.500v3M15 1.500v3M21.500 1.500v3M27.500 1.500v3" stroke="#0b5f83" strokeWidth="2.800" strokeLinecap="round" />
            <path d="M8.500 11h18.500M8.500 17h18.500M8.500 23h18.500" stroke="#066286" strokeWidth="2" />
          </I36>
        </App36>
        <App36 running={false}>
          <I36>
            <rect x="1" y="3.500" width="33" height="27.500" fill="#c9cdd2" />
            <rect x="2.500" y="6.500" width="30" height="23" fill="#000" />
            <path d="M2.500 6.500h30v1C20 8 10 12 2.500 22z" fill="#3b3b3b" />
            <text x="4" y="14.500" fontSize="7.500" fill="#fff" fontFamily="DejaVu Sans Mono">C:\_</text>
          </I36>
        </App36>
        <App36><WeCom size={36} /></App36>
        <App36><WeChat size={36} /></App36>
        <App36><WordLogo size={36} /></App36>
        <App36>
          <I36>
            <defs>
              <linearGradient id="mon" x1="0" y1="0" x2="1" y2="1">
                <stop offset="0" stopColor="#57b0ea" />
                <stop offset="1" stopColor="#2c78b5" />
              </linearGradient>
            </defs>
            <rect x="2" y="4.500" width="32" height="21.500" fill="#4b4f54" />
            <rect x="3" y="5.500" width="30" height="18.500" fill="url(#mon)" />
            <path d="M16.500 26h3v3.500h4.500V31H12v-1.500h4.500z" fill="#0c0c0c" />
          </I36>
        </App36>
        <App36>
          <I36>
            <defs>
              <linearGradient id="hex" x1="0" y1="0" x2="0" y2="1">
                <stop offset="0" stopColor="#4491f3" />
                <stop offset="1" stopColor="#2680f5" />
              </linearGradient>
            </defs>
            <rect width="36" height="36" rx="4" fill="url(#hex)" />
            <path d="M18 9.500l7.700 4.300v8.400L18 26.500l-7.700-4.300v-8.400z" fill="none" stroke="#e8f0fd" strokeWidth="5.500" strokeLinejoin="round" />
            <path d="M17.500 6l-3.500 6M29 15l-6.500-.5M21.500 29.500L22 23M7 21.500l6 .5" stroke="#3a89f4" strokeWidth="1" />
          </I36>
        </App36>
      </div>
      <div className="ml-auto flex items-center pr-[32px]">
        <Svg w={16} h={12}><path d="M1 10l7-7 7 7" stroke="#fff" strokeWidth="2" /></Svg>
        <WeChat size={25} className="ml-[27px]" />
        <svg width="24" height="24" viewBox="0 0 24 24" className="ml-[24px]">
          <circle cx="12" cy="12" r="11.500" fill="#2b87b5" stroke="#52aad4" />
          <path d="M4.500 7l5-1.500.5 8.500 5.500-9h4L10 19.500H7.500z" fill="#fff" />
        </svg>
        <WeCom size={25} className="ml-[24px]" />
        <span className="ml-[23px] text-[23px] leading-none">英</span>
        <span className="ml-[35px] text-[23px] leading-none">拼</span>
        <Svg className="ml-[33px]">
          <path d="M1 10c6-7 16-7 22 0M4.500 13.500c4-5 11-5 15 0M8 17c2.500-2.800 5.500-2.800 8 0" stroke="#fff" strokeWidth="1.700" />
          <circle cx="12" cy="19.500" r="1.700" fill="#fff" stroke="none" />
        </Svg>
        <Svg className="ml-[12px]">
          <path d="M1 8.500h4L10.500 4v16L5 15.500H1zM15 8.500l7.500 7.500M22.500 8.500L15 16" stroke="#fff" strokeWidth="1.600" />
        </Svg>
        <Svg className="ml-[12px]">
          <path d="M9 5.500h9a2.500 2.500 0 0 1 2.500 2.500v8a2.500 2.500 0 0 1-2.500 2.500H4A2.500 2.500 0 0 1 1.500 16v-3" stroke="#fff" strokeWidth="1.700" />
          <path d="M10 8h8v8H4v-2l5-3z" fill="#fff" stroke="none" />
          <path d="M22 10v4" stroke="#fff" strokeWidth="2.500" />
          <path d="M5.500 0L1 7h2.500L2 12l6-7H5z" fill="#fff" stroke="none" />
        </Svg>
        <div className="-mt-[2px] ml-[19px] w-[99px] text-right text-lg leading-6 tracking-[-0.150px]">
          8:54
          <br />
          2024/11/11
        </div>
        <svg width="20" height="24" viewBox="0 0 20 24" className="ml-[13px]">
          <path d="M10 1c5 0 7.500 3.500 7.500 8v5.500l2 4v1H.5v-1l2-4V9C2.500 4.500 5 1 10 1zM6.500 21h7a3.500 3 0 0 1-7 0z" fill="#0078d7" />
        </svg>
      </div>
    </div>
  );
}

export default function App() {
  return (
    <div className={`flex h-[1440px] w-[2160px] flex-col overflow-hidden bg-[#efefef] ${UI}`}>
      <TitleBar />
      <TabRow />
      <Ribbon />
      <div className="flex h-[1065px] shrink-0">
        <NavPane />
        <Doc />
      </div>
      <StatusBar />
      <Taskbar />
    </div>
  );
}
